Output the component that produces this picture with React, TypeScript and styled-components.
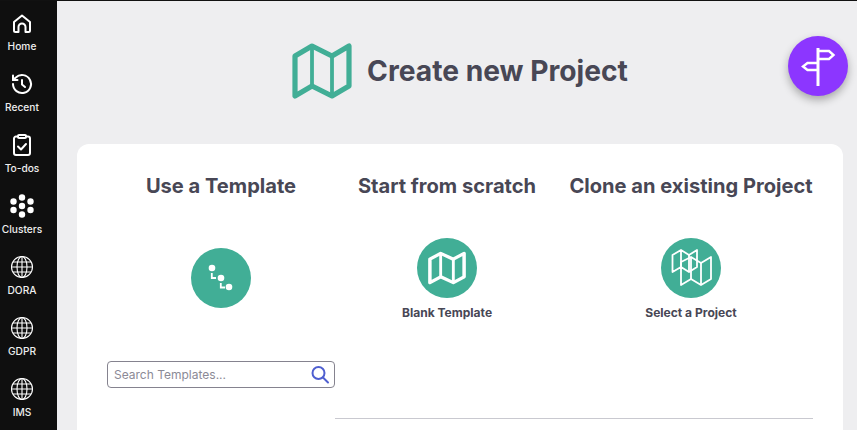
import React from "react";
import styled, { createGlobalStyle } from "styled-components";

const Global = createGlobalStyle`
  html, body { margin: 0; padding: 0; height: 100%; overflow: hidden; }
  body { font-family: Inter, "Liberation Sans", sans-serif; background: #eeeef0; }
  #root { height: 100%; }
`;

const Page = styled.div`
  display: flex;
  width: 857px;
  height: 430px;
  overflow: hidden;
  position: relative;
  background: #eeeef0;
  border-top: 1px solid #111;
  box-sizing: border-box;
`;

const Sidebar = styled.nav`
  width: 57px;
  flex: none;
  background: #0f0f0f;
  display: flex;
  flex-direction: column;
`;

const NavItem = styled.div`
  width: 44px;
  height: 61px;
  flex: none;
  display: flex;
  flex-direction: column;
  align-items: center;
  padding-top: 10px;
  box-sizing: border-box;
  color: #fff;
`;

const NavIcon = styled.svg`
  width: 24px;
  height: 24px;
  display: block;
`;

const NavLabel = styled.span`
  margin-top: 5px;
  font-size: 10.2px;
  line-height: 13px;
  font-weight: 500;
  color: #eeeeee;
  white-space: nowrap;
`;

const Main = styled.main`
  flex: 1;
  min-width: 0;
  display: flex;
  flex-direction: column;
  padding: 0 14px 0 20px;
`;

const TitleRow = styled.header`
  height: 143px;
  flex: none;
  display: flex;
  align-items: flex-start;
  justify-content: center;
  gap: 15px;
  padding: 41px 0 0 0;
  box-sizing: border-box;
`;

const TitleIcon = styled.svg`
  width: 60px;
  height: 58px;
  flex: none;
  display: block;
`;

const Title = styled.h1`
  margin: 11px 0 0;
  font-size: 28.2px;
  line-height: 36px;
  font-weight: 700;
  color: #484755;
  white-space: nowrap;
`;

const Fab = styled.button`
  position: absolute;
  left: 788px;
  top: 35px;
  width: 60px;
  height: 60px;
  border: 0;
  padding: 0;
  border-radius: 50%;
  background: #8c36ff;
  box-shadow: 0 4px 8px rgba(0, 0, 0, 0.3);
  display: flex;
  align-items: center;
  justify-content: center;
`;

const Card = styled.section`
  flex: 1;
  background: #fff;
  border-radius: 12px 12px 0 0;
  padding: 0 30px;
  display: grid;
  grid-template-columns: 228px 224px 253px;
  align-content: start;
`;

const Column = styled.div<{ $offset?: number }>`
  display: flex;
  flex-direction: column;
  align-items: center;
  margin-left: ${(p) => p.$offset ?? 0}px;
`;

const Heading = styled.h2`
  margin: 30px 0 0;
  font-size: 20.1px;
  line-height: 24px;
  font-weight: 700;
  color: #484755;
  white-space: nowrap;
`;

const Circle = styled.div<{ $top: number }>`
  margin-top: ${(p) => p.$top}px;
  width: 60px;
  height: 60px;
  flex: none;
  border-radius: 50%;
  background: #41ae96;
  display: flex;
  align-items: center;
  justify-content: center;
`;

const OptionLabel = styled.span`
  margin-top: 7px;
  font-size: 12.05px;
  line-height: 15px;
  font-weight: 700;
  color: #484755;
  white-space: nowrap;
`;

const Search = styled.div`
  margin-top: 53px;
  width: 228px;
  height: 27px;
  box-sizing: border-box;
  border: 1px solid #85838f;
  border-radius: 4px;
  display: flex;
  align-items: center;
  padding: 0 4px 0 6px;
`;

const SearchText = styled.span`
  flex: 1;
  font-size: 12px;
  color: #8b8a96;
`;

const Divider = styled.div`
  grid-column: 2 / 4;
  margin-top: 30px;
  width: 478px;
  height: 1px;
  background: #c9c9d0;
`;

const Home = () => (
  <NavIcon viewBox="0 0 24 24" fill="none" stroke="currentColor" strokeWidth="2" strokeLinecap="round" strokeLinejoin="round">
    <path d="M4 11 12 4.500l8 6.500V19.500a1.500 1.500 0 0 1-1.500 1.500H15.500V16a3.500 3.500 0 0 0-7 0v5H5.500A1.500 1.500 0 0 1 4 19.500z" />
  </NavIcon>
);

const Recent = () => (
  <NavIcon viewBox="0 0 24 24" fill="none" stroke="currentColor" strokeWidth="2" strokeLinecap="round" strokeLinejoin="round">
    <path d="M3 12a9 9 0 1 0 2.800-6.500L3 8" />
    <path d="M3 3.500V8h4.500" />
    <path d="M12 8v4.500l3 2.500" />
  </NavIcon>
);

const Todos = () => (
  <NavIcon viewBox="0 0 24 24" fill="none" stroke="currentColor" strokeWidth="2" strokeLinecap="round" strokeLinejoin="round">
    <rect x="8" y="2" width="8" height="3" rx="1" />
    <path d="M8 3.500H6a2 2 0 0 0-2 2V20a2 2 0 0 0 2 2h12a2 2 0 0 0 2-2V5.500a2 2 0 0 0-2-2h-2" />
    <path d="m8 13.500 3 3 5-5.500" />
  </NavIcon>
);

const Clusters = () => (
  <NavIcon viewBox="0 0 24 24" fill="#fff">
    <circle cx="12" cy="3.500" r="3.200" />
    <circle cx="3.500" cy="7.500" r="3.200" />
    <circle cx="20.500" cy="7.500" r="3.200" />
    <circle cx="12" cy="12" r="3.200" />
    <circle cx="3.500" cy="16" r="3.200" />
    <circle cx="20.500" cy="16" r="3.200" />
    <circle cx="12" cy="20.500" r="3.200" />
  </NavIcon>
);

const Globe = () => (
  <NavIcon viewBox="0 0 24 24" fill="none" stroke="currentColor" strokeWidth="1.100">
    <circle cx="12" cy="12" r="10.500" />
    <ellipse cx="12" cy="12" rx="5" ry="10.500" />
    <path d="M12 1.500v21M1.500 12h21M3 7h18M3 17h18" />
  </NavIcon>
);

const navItems = [
  { label: "Home", icon: <Home /> },
  { label: "Recent", icon: <Recent /> },
  { label: "To-dos", icon: <Todos /> },
  { label: "Clusters", icon: <Clusters /> },
  { label: "DORA", icon: <Globe /> },
  { label: "GDPR", icon: <Globe /> },
  { label: "IMS", icon: <Globe /> },
];

const mapPath = "M3 14 20 4 40 14 57 4V44L40 54 20 44 3 54Z";

export default function App() {
  return (
    <>
      <Global />
      <Page>
        <Sidebar>
          {navItems.map((n) => (
            <NavItem key={n.label}>
              {n.icon}
              <NavLabel>{n.label}</NavLabel>
            </NavItem>
          ))}
        </Sidebar>
        <Main>
          <TitleRow>
            <TitleIcon viewBox="0 0 60 58" fill="none" stroke="#41ae96" strokeLinejoin="round">
              <path d={mapPath} strokeWidth="5.200" />
              <path d="M20 4V44M40 14V54" strokeWidth="3.800" />
            </TitleIcon>
            <Title>Create new Project</Title>
          </TitleRow>
          <Card>
            <Column>
              <Heading>Use a Template</Heading>
              <Circle $top={50}>
                <svg width="28" height="28" viewBox="0 0 28 28" fill="#fff">
                  <circle cx="5" cy="4" r="3.300" />
                  <circle cx="14" cy="14" r="3.300" />
                  <circle cx="22" cy="23" r="3.300" />
                  <path d="M4.800 9v5H9" fill="none" stroke="#fff" strokeWidth="1.800" />
                  <path d="M13.800 19v4.500H18" fill="none" stroke="#fff" strokeWidth="1.800" />
                </svg>
              </Circle>
              <Search>
                <SearchText>Search Templates...</SearchText>
                <svg width="20" height="20" viewBox="0 0 20 20" fill="none" stroke="#4f5fd0" strokeWidth="2" strokeLinecap="round">
                  <circle cx="8.500" cy="8" r="6" />
                  <path d="m13 12.500 5 5" />
                </svg>
              </Search>
            </Column>
            <Column>
              <Heading>Start from scratch</Heading>
              <Circle $top={40}>
                <svg width="38" height="34" viewBox="0 0 60 58" preserveAspectRatio="none" fill="none" stroke="#fff" strokeWidth="5.500" strokeLinejoin="round">
                  <path d={mapPath} />
                  <path d="M20 4V44M40 14V54" strokeWidth="4.500" />
                </svg>
              </Circle>
              <OptionLabel>Blank Template</OptionLabel>
            </Column>
            <Column $offset={11}>
              <Heading>Clone an existing Project</Heading>
              <Circle $top={40}>
                <svg width="60" height="60" viewBox="0 0 60 60" fill="none" stroke="#fff" strokeWidth="1.800" strokeLinejoin="round">
                  <path d="M11.500 17 20 12l8 5 8-5v17l-8 5-8-5-8.500 5Z" />
                  <path d="M20 12v17M28 17v17" />
                  <path d="M20 24l10-5 10 6 10-6v22l-10 6-10-6-10 6Z" />
                  <path d="M30 19v22M40 25v22" />
                </svg>
              </Circle>
              <OptionLabel>Select a Project</OptionLabel>
            </Column>
            <Divider />
          </Card>
        </Main>
        <Fab aria-label="Guide">
          <svg width="36" height="40" viewBox="0 0 36 40" fill="none" stroke="#fff" strokeLinejoin="miter">
            <path d="M18 2v38" strokeWidth="3" />
            <path d="M18 5H29l4.500 4-4.500 4H18" strokeWidth="2.400" />
            <path d="M18 17H7.500L3 20.500 7.500 24H18" strokeWidth="2.400" />
          </svg>
        </Fab>
      </Page>
    </>
  );
}
